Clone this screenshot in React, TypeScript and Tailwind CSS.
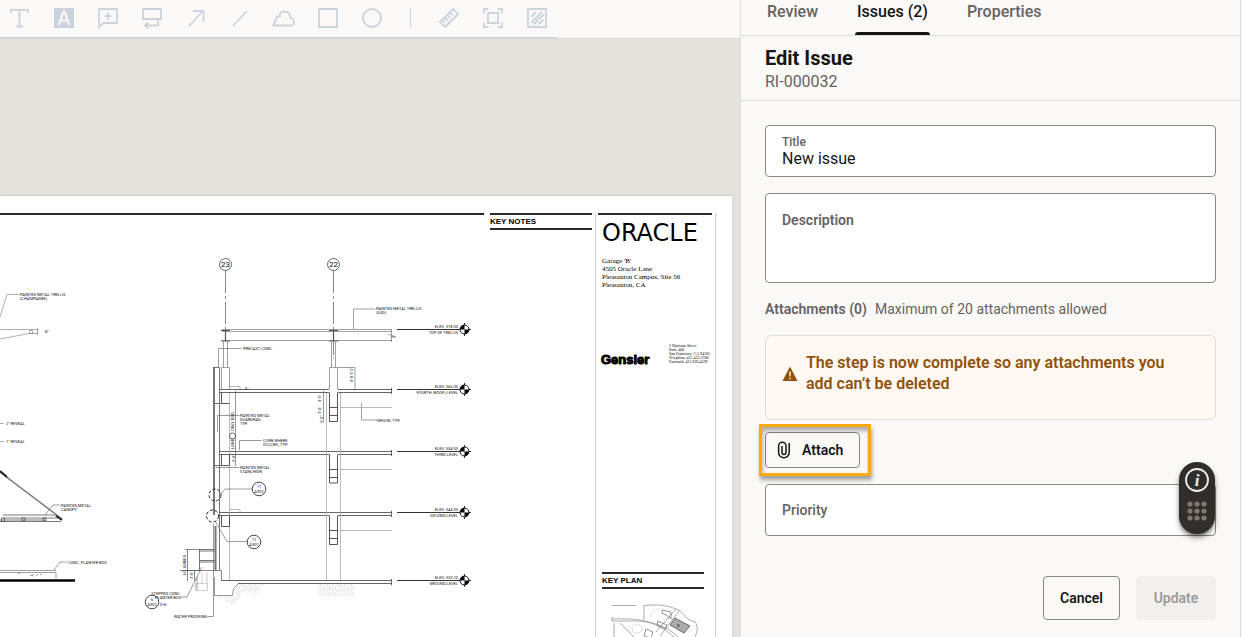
import { useState } from 'react';
import type { ReactNode } from 'react';

const tools: { name: string; icon: ReactNode }[] = [
  { name: 'Text', icon: <path d="M1 5V1.800h17V5M9.500 2v17M6 18.500h7" /> },
  {
    name: 'Highlight',
    icon: (
      <>
        <rect x="0" y="0" width="20" height="20" fill="#cdd3dc" stroke="none" />
        <path d="M5 17 9.200 4h1.600L15 17M6.500 12.500h7" stroke="#faf9f8" strokeWidth="2.200" />
      </>
    ),
  },
  { name: 'Comment', icon: <path d="M1 19V1h18v14H5.500zM10 4.500v7.500M6.300 8.200h7.500" /> },
  { name: 'Replace text', icon: <path d="M1 1h18v10H1zM16 11v6.500H3M6 14.500l-3 3 3 3" /> },
  { name: 'Arrow', icon: <path d="M2.500 18.500 17 3M7 3h10.500v11" /> },
  { name: 'Line', icon: <path d="M3 18 17 3" /> },
  {
    name: 'Cloud',
    icon: <path d="M-.5 17.500h17.500c4 0 4.300-6.500-.5-7.500-.3-5-3.500-7-6-6-1.500-1.500-5 .8-4.500 4C2 8.500 1 11 1.500 13.500.2 14.500-.5 16-.5 17.500z" />,
  },
  { name: 'Rectangle', icon: <path d="M1 1h18v18H1z" /> },
  { name: 'Ellipse', icon: <circle cx="10" cy="10" r="9" /> },
];

const measureTools: { name: string; icon: ReactNode }[] = [
  {
    name: 'Measure',
    icon: (
      <path d="M14 1l5 5L6 19l-5-5zM6 14.500l-2-2M9 12.500l-3-3M11 9.500l-2-2M14 7.500l-3-3" />
    ),
  },
  {
    name: 'Area',
    icon: <path d="M1 5.500V1h4.500M14.500 1H19v4.500M19 14.500V19h-4.500M5.500 19H1v-4.500M5 5h10v10H5z" />,
  },
  {
    name: 'Hatch',
    icon: <path d="M1 1h18v18H1zM4 9l5-5M4 15 15 4M6.500 16.500 16.500 6.500M11.500 16.500l5-5" />,
  },
];

const levels = [
  { y: 330, elev: 'ELEV. 378.00', name: 'TOP OF TRELLIS' },
  { y: 390, elev: 'ELEV. 366.00', name: 'FOURTH (ROOF) LEVEL' },
  { y: 452, elev: 'ELEV. 354.00', name: 'THIRD LEVEL' },
  { y: 513, elev: 'ELEV. 344.00', name: 'SECOND LEVEL' },
  { y: 581, elev: 'ELEV. 333.20', name: 'GROUND LEVEL' },
];

function ToolButton({ name, icon }: { name: string; icon: ReactNode }) {
  return (
    <button type="button" aria-label={name} className="h-5 w-5 shrink-0">
      <svg viewBox="0 0 20 20" className="h-5 w-5 overflow-visible" fill="none" stroke="#cdd3dc" strokeWidth="1.800">
        {icon}
      </svg>
    </button>
  );
}

function Toolbar() {
  return (
    <div className="flex items-start border-b border-[#d5d7dc] bg-[#faf9f8]">
      <div className="flex items-center gap-6 border-b border-[#cdd1dc] pt-2 pr-2.5 pb-[9px] pl-2.5">
        {tools.map((tool) => (
          <ToolButton key={tool.name} {...tool} />
        ))}
        <div className="flex w-[9px] justify-center">
          <div className="h-5 w-px bg-[#cdd3dc]" />
        </div>
        {measureTools.map((tool) => (
          <ToolButton key={tool.name} {...tool} />
        ))}
      </div>
    </div>
  );
}

function LevelMarker({ y, elev, name }: { y: number; elev: string; name: string }) {
  return (
    <g>
      <path d={`M397 ${y - 0.5}H471M464.500 ${y - 7}v13`} stroke="#333" strokeWidth="1" />
      <circle cx="464.500" cy={y - 0.5} r="4.500" fill="#fff" stroke="#111" />
      <path
        d={`M464.500 ${y - 0.5}v-4.500a4.500 4.500 0 0 1 4.500 4.500zM464.500 ${y - 0.5}v4.500a4.500 4.500 0 0 1-4.500-4.500z`}
        fill="#000"
        transform={`rotate(-90 464.500 ${y - 0.5})`}
      />
      <text x="458" y={y - 2} textAnchor="end">{elev}</text>
      <text x="458" y={y + 4} textAnchor="end">{name}</text>
    </g>
  );
}

function Callout({ x, y, top, bottom }: { x: number; y: number; top: string; bottom: string }) {
  return (
    <g>
      <circle cx={x} cy={y} r="6.800" fill="none" stroke="#333" strokeWidth=".9" />
      <text x={x} y={y - 1} textAnchor="middle">{top}</text>
      <text x={x} y={y + 4} textAnchor="middle">{bottom}</text>
    </g>
  );
}

function SectionDrawing() {
  return (
    <svg
      viewBox="0 196 490 441"
      className="h-[441px] w-[490px] shrink-0 font-['Roboto',sans-serif] text-[4px]"
      fill="#111"
    >
      <defs>
        <pattern id="earth" width="6" height="6" patternUnits="userSpaceOnUse">
          <path d="M0 0l6 6M0 3l3 3M3 0l3 3M6 0 3 3" stroke="#ccc" strokeWidth=".5" />
        </pattern>
      </defs>
      <path d="M0 214h484" stroke="#2b2929" strokeWidth="2" />

      {/* trellis detail */}
      <g fill="none" stroke="#777" strokeWidth=".6">
        <path d="M0 317l7-22.500h12" />
        <path d="M0 329.500h39M0 339l29-5.500h9M37.500 328v7M29.500 330.500h3v3h-3z" />
        <path d="M0 423.500h4M0 441.500h4" />
      </g>
      <text x="20" y="296">PAINTED METAL TRELLIS</text>
      <text x="20" y="300">(CHAMPAGNE)</text>
      <text x="45" y="333">8"</text>
      <text x="6" y="425">2" REVEAL</text>
      <text x="6" y="443">1" REVEAL</text>

      {/* canopy detail */}
      <path d="M0 472l62 47" stroke="#777" strokeWidth="1.400" />
      <path d="M0 471l7 6M56 516l6 4" stroke="#222" strokeWidth="2" />
      <g fill="none" stroke="#555" strokeWidth=".8">
        <path d="M3 515h54M3 518h58M0 520h46M0 521.500h61M1.500 518h3v3.500h-3zM22 518h3v3h-3zM43 518h3v3h-3z" />
        <path d="M45 515l8-10h7" strokeWidth=".6" />
      </g>
      <text x="61" y="507">PAINTED METAL</text>
      <text x="61" y="511">CANOPY</text>

      {/* planter */}
      <g fill="none" stroke="#777" strokeWidth=".7">
        <path d="M0 570.500h56M0 572.500h56v8M54 570l6-8h7" />
        <path d="M18 573l2 1M30 575l3 1v-2M36 576l2-2M40 575l2-1" />
      </g>
      <path d="M0 580.500h75" stroke="#000" strokeWidth="2.500" />
      <text x="68" y="564">CONC. PLANTER BOX</text>

      {/* grid lines */}
      <g fill="none" stroke="#444">
        <circle cx="225.500" cy="264.500" r="6" strokeWidth=".8" />
        <circle cx="333.500" cy="264.500" r="6" strokeWidth=".8" />
        <path d="M225.500 271v59M333.500 271v88" stroke="#888" strokeDasharray="22 3 3 3" />
      </g>
      <text x="225.500" y="267" textAnchor="middle" className="text-[8px]">23</text>
      <text x="333.500" y="267" textAnchor="middle" className="text-[8px]">22</text>

      {/* trellis and posts */}
      <g fill="none" stroke="#777" strokeWidth=".7">
        <path d="M222 329.500h170M222 331.500h170M222 340.500h170M391.500 329v13" />
        <path d="M223.500 342v25M227.500 342v25M331.500 342v25M335.500 342v25" />
        <path d="M221.500 367.500h8v22M221.500 367.500v22M329.500 389v-21.500h8v22" />
        <path d="M218.500 367v-18.500h23M353.500 329v-20h22M338 367.500h17v22M361.500 403v17h16" />
        <path d="M388 334l8 3-5-1 3 2" />
      </g>
      <path d="M221 330.500h9M221 341h9M329 330.500h9M329 341h9M225.500 330v11M333.500 330v11" stroke="#555" strokeWidth="1.200" />

      {/* floor slabs */}
      <g fill="none" stroke="#555" strokeWidth=".9">
        <path d="M219 389.500h110M338 389.500h54M219 392.500h110M338 392.500h54" />
        <path d="M219 451.500h173M219 454.500h110M338 454.500h54" />
        <path d="M219 512.500h173M219 515.500h110M338 515.500h54" />
        <path d="M221 580.500h171M238 583.500h154M391.500 388v6M391.500 450v6M391.500 511v6M391.500 579v6" />
      </g>

      {/* columns */}
      <g fill="none" stroke="#aaa" strokeWidth=".8">
        <path d="M326.500 393v187M340.500 393v187M229.500 393v187" />
        <path d="M340 407.500h52M340 469.500h52M340 530.500h52M230 386.500h10v3M230 509.500h10v3" />
      </g>
      <g fill="none" stroke="#444" strokeWidth=".9">
        <path d="M329.500 392.500v29h8v-29M329.500 407.500h8M329.500 415.500h8" />
        <path d="M329.500 454.500v28.500h8v-28.500M329.500 469.500h8M329.500 477.500h8" />
        <path d="M329.500 515.500v29h8v-29M329.500 530.500h8M329.500 538.500h8" />
        <path d="M221.500 393v10.500h8M221.500 455v10.500h8v-11M221.500 516v10.500h8v-11" />
      </g>

      {/* exterior wall */}
      <path d="M214 367v148M215.500 526v44" stroke="#777" strokeWidth="2" />
      <g fill="none" stroke="#555" strokeWidth=".8">
        <path d="M213 367.500h6.500V570M214 403.500h8M214 465.500h8" />
        <path d="M217.500 432v-16.500h22M216 467.500h23M239.500 450v-9.500h22M235.500 391v75M323.500 391v31" strokeWidth=".6" />
        <path d="M199.500 549.500h15M199.500 551h15M199.500 560.500h15M199.500 562h15M199.500 549v22" />
        <path d="M187.500 549v32M185 549.500h14M194.500 570v11M185 570.500h36.500v10M180 570.500h20" strokeWidth=".7" />
        <path d="M214.500 577v18.500h18l1-7 5-5M213.500 524v92.500h-6M202 567l-15 30h-6M197 577v13" strokeWidth=".6" />
        <path d="M195.500 583.500h12v7h-12zM207 572v11M202 572v11" stroke="#aaa" strokeWidth=".6" />
      </g>
      <path d="M238 584h26l-9 12-9-7-13 17-17-10h17zM318 584h36v12h-36z" fill="url(#earth)" />
      <g fill="none" stroke="#222" strokeDasharray="3 2">
        <circle cx="215" cy="495" r="6" />
        <circle cx="212.500" cy="516" r="6" />
      </g>
      <path d="M221 494l4-5h27M215 521l12 20.500h20" fill="none" stroke="#777" strokeWidth=".7" />

      <Callout x={259} y={489} top="11" bottom="A902" />
      <Callout x={254} y={542} top="12" bottom="A902" />
      <Callout x={152} y={602} top="6" bottom="A902" />
      <circle cx="232.500" cy="436" r="3" fill="none" stroke="#333" strokeWidth=".7" />

      <text x="376" y="310">PAINTED METAL TRELLIS</text>
      <text x="376" y="314">(SSD)</text>
      <text x="243" y="350">PRECAST CONC.</text>
      <text x="240" y="417">PAINTED METAL</text>
      <text x="240" y="421">GUARDRAIL</text>
      <text x="240" y="425">TYP.</text>
      <text x="263" y="442">CURB WHERE</text>
      <text x="263" y="446">OCCURS, TYP.</text>
      <text x="240" y="469">PAINTED METAL</text>
      <text x="240" y="473">STANCHION</text>
      <text x="377" y="422">GROUN. TYP.</text>
      <text x="245" y="390">6"</text>
      <text transform="rotate(-90 353 382)" x="353" y="382">3'-8 1/2"</text>
      <text transform="rotate(-90 321 402)" x="321" y="402">3'-0"</text>
      <text transform="rotate(-90 321 414)" x="321" y="414">1'-4"</text>
      <text transform="rotate(-90 323 423)" x="323" y="423">2'-0"</text>
      <text transform="rotate(-90 234 449)" x="234" y="449">LAND</text>
      <text transform="rotate(-90 234 431)" x="234" y="431">ONLY, BSD</text>
      <text transform="rotate(-90 235 462)" x="235" y="462">2'-4"</text>
      <text transform="rotate(-90 186 575)" x="186" y="575">HT. VARIES</text>
      <text transform="rotate(-90 193 579)" x="193" y="579">1'-8"</text>
      <text x="181" y="595" textAnchor="end">STEPPED CONC.</text>
      <text x="181" y="599" textAnchor="end">PLANTER BOX</text>
      <text x="160" y="606">O.H.</text>
      <text x="207" y="618" textAnchor="end">WATER PROOFING</text>

      {levels.map((level) => (
        <LevelMarker key={level.name} {...level} />
      ))}
    </svg>
  );
}

function KeyPlanMap() {
  return (
    <svg viewBox="0 0 94 36" className="mt-3.5 ml-3 h-9 w-[94px]" fill="none" stroke="#888" strokeWidth=".7">
      <path d="M2 2.500h24M34 17V2.500c12-1 24-1 35 5M2 14v4h26c20 1 33 8 42 18M2 16c24-1 44 1 62 18" />
      <path d="M69 7.500c4 1 7 11 16 11 4 6 2 12-1 17M69 8 50 33M66 6 46 29M10 20l16 16M4 20v16" />
      <path d="M52 7l9 2v7l-5-4-4-2zM48 18l9 4-2 4-8-4zM36 26l7 3-2 6-7-2z" stroke="#666" />
      <path d="M41 15c-1-5 3-9 8-9M22 24c3-4 8-4 10 1 1 5-5 6-9 4z" stroke="#ccc" />
      <path d="M65 15l15 8-6 7-14-8z" fill="#aaa" stroke="#444" />
      <text x="67" y="24" stroke="none" fill="#222" className="font-['Liberation_Sans',sans-serif] text-[4px]">B</text>
    </svg>
  );
}

function DrawingSheet() {
  return (
    <div className="mt-[156px] mr-2 flex flex-1 justify-end overflow-hidden border-t border-[#cfcecb] bg-white pr-4 shadow-sm">
      <SectionDrawing />
      <div className="mt-[17px] w-[102px] shrink-0">
        <h2 className="border-y-2 border-[#2b2929] font-['Liberation_Sans',Arial,sans-serif] text-[8px] leading-[13px] font-bold text-black">
          KEY NOTES
        </h2>
      </div>
      <div className="mt-[17px] ml-[3px] w-[121px] shrink-0 border-x border-[#d4d4d4] pr-[3px] pl-0.5 text-black">
        <div className="border-t-2 border-[#2b2929] pt-1.5 pl-1 font-['DejaVu_Sans',sans-serif] text-2xl leading-6">
          ORACLE
        </div>
        <address className="mt-3 pl-1 font-['Liberation_Serif',serif] text-[7px] leading-[8px] not-italic">
          Garage 'B'
          <br />
          4505 Oracle Lane
          <br />
          Pleasanton Campus, Site 56
          <br />
          Pleasanton, CA
        </address>
        <div className="mt-[55px] flex items-end justify-between pl-[3px]">
          <span className="font-['Liberation_Sans',Arial,sans-serif] text-[13px] leading-2 font-bold [-webkit-text-stroke:1px_black]">
            Gensler
          </span>
          <address className="w-[43px] font-['Liberation_Serif',serif] text-[4px] leading-[4px] whitespace-nowrap not-italic">
            2 Harrison Street
            <br />
            Suite 400
            <br />
            San Francisco, CA 94105
            <br />
            Telephone 415.433.3700
            <br />
            Facsimile 415.836.4599
          </address>
        </div>
        <h2 className="mt-[208px] mr-2 ml-1 border-y-2 border-[#2b2929] font-['Liberation_Sans',Arial,sans-serif] text-[8px] leading-[13px] font-bold">
          KEY PLAN
        </h2>
        <KeyPlanMap />
      </div>
    </div>
  );
}

function HelpWidget() {
  return (
    <button
      type="button"
      aria-label="Help"
      className="absolute -top-[22px] right-px h-[72px] w-9 rounded-full bg-[#312d2a] shadow-md shadow-black/50"
    >
      <svg viewBox="0 0 36 72" className="h-[72px] w-9">
        <circle cx="18" cy="18" r="11" fill="none" stroke="#f1efed" strokeWidth="1.800" />
        <text x="18" y="24" textAnchor="middle" fill="#f1efed" className="font-['Liberation_Serif',serif] text-[17px] font-bold italic">
          i
        </text>
        {[42, 49, 56].map((y) =>
          [11, 18, 25].map((x) => <circle key={`${x}-${y}`} cx={x} cy={y} r="2.600" fill="#7d7875" />)
        )}
      </svg>
    </button>
  );
}

function IssuePanel() {
  const [activeTab, setActiveTab] = useState('Issues (2)');
  const [title, setTitle] = useState('New issue');

  return (
    <aside className="mr-px w-[501px] shrink-0 border-x border-[#dfdddb] bg-[#faf9f8]">
      <nav className="flex gap-[19px] border-b border-[#dfdddb] px-4">
        {['Review', 'Issues (2)', 'Properties'].map((tab) => (
          <button
            key={tab}
            type="button"
            onClick={() => setActiveTab(tab)}
            className={`flex flex-col px-2.5 text-base leading-6 font-medium ${
              tab === activeTab ? 'text-[#161513]' : 'text-[#66625f]'
            }`}
          >
            {tab}
            <span className={`-mx-0.5 mt-2 h-[3px] self-stretch rounded-t ${tab === activeTab ? 'bg-[#161513]' : ''}`} />
          </button>
        ))}
      </nav>

      <header className="border-b border-[#dfdddb] px-6 pt-2.5 pb-1.5">
        <h1 className="text-xl leading-6 font-bold text-[#161513]">Edit Issue</h1>
        <p className="text-base leading-6 text-[#66625f]">RI-000032</p>
      </header>

      <form className="px-6 pt-6" onSubmit={(e) => e.preventDefault()}>
        <div className="flex h-[52px] flex-col rounded border border-[#8b8783] bg-white px-4 pt-2">
          <label htmlFor="title" className="text-xs leading-4 font-medium text-[#66625f]">
            Title
          </label>
          <input
            id="title"
            value={title}
            onChange={(e) => setTitle(e.target.value)}
            className="h-4 w-full text-base leading-4 text-[#161513] outline-none"
          />
        </div>

        <div className="mt-4 flex h-[90px] flex-col rounded border border-[#8b8783] bg-white px-4 pt-4">
          <label htmlFor="description" className="text-sm leading-5 font-semibold text-[#66625f]">
            Description
          </label>
          <textarea id="description" className="w-full flex-1 resize-none outline-none" />
        </div>

        <p className="mt-4 flex gap-2 text-sm leading-5 text-[#66625f]">
          <span className="font-semibold">Attachments (0)</span>
          <span>Maximum of 20 attachments allowed</span>
        </p>

        <div role="alert" className="mt-4 flex h-[85px] items-start gap-2 rounded-md border border-[#dfdddb] bg-[#fff8f2] pt-4 pr-8 pl-4">
          <svg viewBox="0 0 16 16" className="mt-3.5 h-4 w-4 shrink-0">
            <path d="M8 0.500 15.500 15H.5z" fill="#8f520a" />
            <path d="M8 5.500v5M8 11.800v1.500" stroke="#fff8f2" strokeWidth="1.400" />
          </svg>
          <p className="text-base leading-[21px] font-semibold text-[#8f520a]">
            The step is now complete so any attachments you add can’t be deleted
          </p>
        </div>

        <div className="relative mt-3 w-fit">
          <button
            type="button"
            className="flex h-9 items-center gap-2.5 rounded border border-[#8b8783] px-2.5 pr-4 text-sm font-semibold text-[#161513]"
          >
            <svg viewBox="0 0 16 18" className="h-[18px] w-4" fill="none" stroke="#161513" strokeWidth="1.500">
              <path d="M13.200 2v9.500a5.300 5.300 0 0 1-10.600 0V5a3.500 3.500 0 0 1 7.400 0v6.500a2 2 0 0 1-4 0V5" />
            </svg>
            Attach
          </button>
          <div className="pointer-events-none absolute -top-2 -left-1.5 h-[52px] w-28 border-3 border-[#f9ab0b] shadow-[1px_4px_4px_rgba(0,0,0,0.35),inset_1px_4px_4px_rgba(0,0,0,0.3)]" />
        </div>

        <div className="relative mt-4">
          <div className="flex h-[52px] items-center gap-2 rounded border border-[#8b8783] bg-white px-4">
            <label htmlFor="priority" className="text-sm leading-5 font-medium text-[#66625f]">
              Priority
            </label>
            <input id="priority" className="min-w-0 flex-1 outline-none" />
          </div>
          <HelpWidget />
        </div>

        <div className="mt-10 flex justify-end gap-4 text-sm font-semibold">
          <button type="button" className="h-11 rounded border border-[#8b8783] px-4 text-[#161513]">
            Cancel
          </button>
          <button type="submit" disabled className="h-11 w-20 rounded bg-[#f1f0ee] text-[#9d9a97]">
            Update
          </button>
        </div>
      </form>
    </aside>
  );
}

export default function App() {
  return (
    <div className="flex h-screen overflow-hidden bg-[#faf9f8] font-['Roboto',sans-serif]">
      <main className="flex min-w-0 flex-1 flex-col bg-[#e3e2dd]">
        <Toolbar />
        <DrawingSheet />
      </main>
      <IssuePanel />
    </div>
  );
}
